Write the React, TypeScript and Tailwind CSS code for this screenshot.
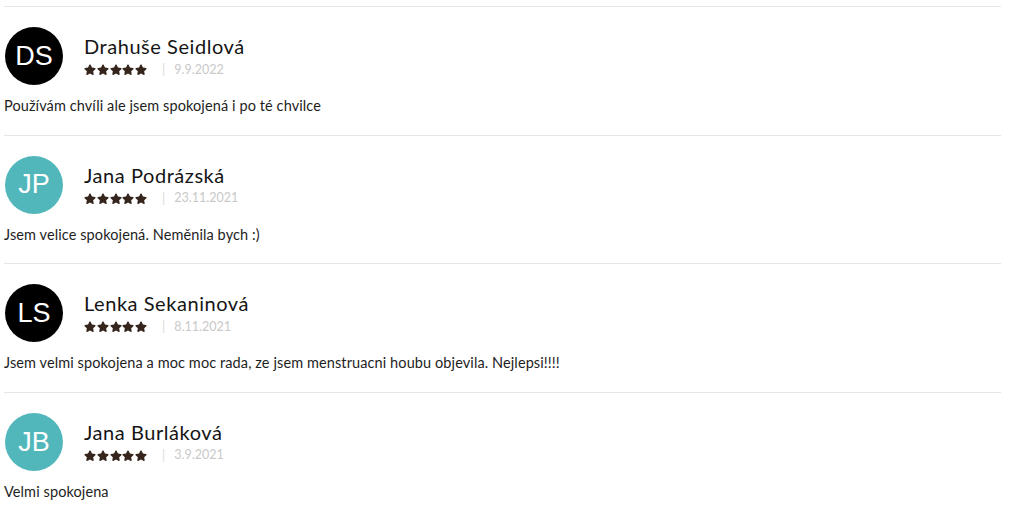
import React from 'react';

const reviews = [
  { initials: 'DS', name: 'Drahuše Seidlová', date: '9.9.2022', text: 'Používám chvíli ale jsem spokojená i po té chvilce', dark: true },
  { initials: 'JP', name: 'Jana Podrázská', date: '23.11.2021', text: 'Jsem velice spokojená. Neměnila bych :)', dark: false },
  { initials: 'LS', name: 'Lenka Sekaninová', date: '8.11.2021', text: 'Jsem velmi spokojena a moc moc rada, ze jsem menstruacni houbu objevila. Nejlepsi!!!!', dark: true },
  { initials: 'JB', name: 'Jana Burláková', date: '3.9.2021', text: 'Velmi spokojena', dark: false },
];

const Star = () => (
  <svg width="12" height="11.5" viewBox="0 0 576 512" className="fill-[#35251d]">
    <path d="M259.3 17.8L194 150.2 47.9 171.5c-26.2 3.8-36.7 36.1-17.7 54.6l105.7 103-25 145.5c-4.5 26.3 23.2 46 46.4 33.7L288 439.6l130.7 68.7c23.2 12.2 50.9-7.4 46.4-33.7l-25-145.5 105.7-103c19-18.5 8.5-50.8-17.7-54.6L382 150.2 316.7 17.8c-11.7-23.6-45.6-23.9-57.4 0z" />
  </svg>
);

const App: React.FC = () => {
  return (
    <div className="min-h-screen bg-white pl-1 pr-2 pt-[6px] font-['Lato','Noto_Sans',sans-serif]">
      {reviews.map((r, i) => (
        <div key={i} className="border-t border-[#e6e6e6] pt-5 pb-[18.6px]">
          <div className="flex items-start">
            <div
              className={`ml-px w-[58px] h-[58px] rounded-full flex items-center justify-center text-white text-[27px] font-['Liberation_Sans',Arial,sans-serif] ${
                r.dark ? 'bg-black' : 'bg-[#52b7bb]'
              }`}
            >
              {r.initials}
            </div>
            <div className="ml-[21px] pt-[6px] flex flex-col">
              <div className="text-[20px] leading-[26px] text-[#151515] tracking-[0.55px]">{r.name}</div>
              <div className="mt-[4px] flex items-center h-[14px]">
                <div className="flex gap-[0.75px]">
                  <Star /><Star /><Star /><Star /><Star />
                </div>
                <span className="ml-[15px] text-[13px] text-[#dcdcdc]">|</span>
                <span className="ml-[9px] text-[12.5px] text-[#c9c9c9]">{r.date}</span>
              </div>
            </div>
          </div>
          <p className="mt-[11px] text-[14.5px] leading-5 text-[#1e1e1e] tracking-[0.1px]">{r.text}</p>
        </div>
      ))}
    </div>
  );
};

export default App;
